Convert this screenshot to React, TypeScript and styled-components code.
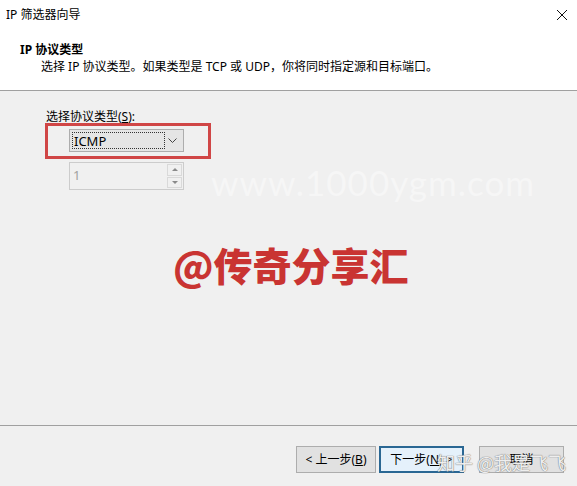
import React from 'react';
import styled, { createGlobalStyle } from 'styled-components';

const FONT = `"Noto Sans", "Noto Sans CJK SC", sans-serif`;

const GlobalStyle = createGlobalStyle`
  html, body {
    margin: 0;
    padding: 0;
    background: #f0f0f0;
  }
  body {
    font-family: ${FONT};
    font-size: 12px;
    color: #000;
  }
`;

const Window = styled.div`
  width: 577px;
  height: 486px;
  display: flex;
  flex-direction: column;
  overflow: hidden;
  position: relative;
`;

const Header = styled.div`
  height: 90px;
  background: #fff;
  border-bottom: 1px solid #a0a0a0;
  display: flex;
  flex-direction: column;
`;

const TitleBar = styled.div`
  height: 30px;
  display: flex;
  align-items: center;
  justify-content: space-between;
  padding: 0 9px 1px 6px;
  line-height: 16px;
`;

const CloseIcon = styled.svg`
  width: 12px;
  height: 12px;
  margin-top: -1px;
`;

const Heading = styled.div`
  margin-top: 11px;
  padding-left: 20px;
  font-weight: 700;
  line-height: 16px;
`;

const Subtitle = styled.div`
  padding-left: 41px;
  line-height: 17px;
`;

const Body = styled.div`
  flex: 1;
  position: relative;
  padding: 18px 0 0 46px;
`;

const FieldLabel = styled.div`
  line-height: 15px;
  u {
    text-decoration: underline;
  }
`;

const FieldColumn = styled.div`
  margin-left: 23px;
  display: flex;
  flex-direction: column;
  width: 115px;
`;

const ComboWrap = styled.div`
  position: relative;
  margin-top: 5px;
`;

const Annotation = styled.div`
  position: absolute;
  left: -24px;
  top: -6px;
  width: 166px;
  height: 36px;
  box-sizing: border-box;
  border: 3px solid #d04646;
  pointer-events: none;
`;

const Combo = styled.div`
  height: 23px;
  box-sizing: border-box;
  border: 1px solid #adadad;
  background: #e5e5e5;
  display: flex;
  align-items: center;
  padding: 0 6px 0 2px;
`;

const FocusText = styled.span`
  flex: 0 0 93px;
  height: 17px;
  box-sizing: border-box;
  border: 1px dotted #333;
  display: flex;
  align-items: center;
  padding-left: 1px;
  font-size: 13px;
`;

const Chevron = styled.svg`
  margin-left: auto;
  width: 9px;
  height: 6px;
`;

const Spin = styled.div`
  margin-top: 10px;
  height: 28px;
  box-sizing: border-box;
  border: 1px solid #cccccc;
  background: #f0f0f0;
  display: flex;
`;

const SpinValue = styled.div`
  flex: 1;
  color: #a0a0a0;
  padding: 3px 0 0 3px;
  font-size: 13px;
`;

const SpinButtons = styled.div`
  width: 15px;
  margin: 1px 1px 1px 0;
  display: flex;
  flex-direction: column;
  gap: 1px;
`;

const SpinButton = styled.div`
  flex: 1;
  border: 1px solid #d9d9d9;
  background: #f0f0f0;
  display: flex;
  align-items: center;
  justify-content: center;
`;

const Arrow = styled.div<{ $down?: boolean }>`
  width: 0;
  height: 0;
  border-left: 3px solid transparent;
  border-right: 3px solid transparent;
  ${(p) =>
    p.$down
      ? 'border-top: 3px solid #8a8a8a;'
      : 'border-bottom: 3px solid #8a8a8a;'}
`;

const SiteMark = styled.div`
  position: absolute;
  left: 211px;
  top: 70px;
  font-family: Lato, "DejaVu Sans", sans-serif;
  font-weight: 400;
  font-size: 35px;
  letter-spacing: 1px;
  color: #f6f6f6;
  pointer-events: none;
`;

const BrandMark = styled.div`
  position: absolute;
  left: 173px;
  top: 150px;
  font-family: "Noto Sans CJK SC", sans-serif;
  font-weight: 900;
  font-size: 39px;
  line-height: 46px;
  color: #c93432;
  pointer-events: none;
`;

const Footer = styled.div`
  height: 61px;
  border-top: 1px solid #a0a0a0;
  display: flex;
  align-items: flex-start;
  justify-content: flex-end;
  padding: 20px 13px 0 0;
  box-sizing: border-box;
  position: relative;
`;

const Button = styled.div<{ $w: number; $primary?: boolean; $gap?: number }>`
  width: ${(p) => p.$w}px;
  height: 27px;
  box-sizing: border-box;
  margin-left: ${(p) => p.$gap ?? 0}px;
  border: ${(p) => (p.$primary ? '2px solid #2a6793' : '1px solid #adadad')};
  background: ${(p) => (p.$primary ? '#e5f1fb' : '#e1e1e1')};
  display: flex;
  align-items: center;
  justify-content: center;
  line-height: 16px;
  u {
    text-decoration: underline;
  }
`;

const ZhihuMark = styled.div`
  position: absolute;
  left: 437px;
  top: 24px;
  font-family: "Noto Sans CJK SC", sans-serif;
  font-size: 18px;
  line-height: 24px;
  color: rgba(255, 255, 255, 0.9);
  text-shadow:
    0 0 1px #7a7a7a,
    0 0 1px #7a7a7a;
  white-space: pre;
  pointer-events: none;
`;

export default function App() {
  return (
    <Window>
      <GlobalStyle />
      <Header>
        <TitleBar>
          <span>IP 筛选器向导</span>
          <CloseIcon viewBox="0 0 12 12">
            <path d="M1 1L11 11M11 1L1 11" stroke="#111" strokeWidth="1" fill="none" />
          </CloseIcon>
        </TitleBar>
        <Heading>IP 协议类型</Heading>
        <Subtitle>选择 IP 协议类型。如果类型是 TCP 或 UDP，你将同时指定源和目标端口。</Subtitle>
      </Header>
      <Body>
        <FieldLabel>
          选择协议类型(<u>S</u>):
        </FieldLabel>
        <FieldColumn>
          <ComboWrap>
            <Combo>
              <FocusText>ICMP</FocusText>
              <Chevron viewBox="0 0 9 6">
                <path d="M0.5 0.5L4.5 4.5L8.5 0.5" stroke="#444" strokeWidth="1" fill="none" />
              </Chevron>
            </Combo>
            <Annotation />
          </ComboWrap>
          <Spin>
            <SpinValue>1</SpinValue>
            <SpinButtons>
              <SpinButton>
                <Arrow />
              </SpinButton>
              <SpinButton>
                <Arrow $down />
              </SpinButton>
            </SpinButtons>
          </Spin>
        </FieldColumn>
        <SiteMark>www.1000ygm.com</SiteMark>
        <BrandMark>@传奇分享汇</BrandMark>
      </Body>
      <Footer>
        <Button $w={80}>
          &lt; 上一步(<u>B</u>)
        </Button>
        <Button $w={85} $gap={3} $primary>
          下一步(<u>N</u>) &gt;
        </Button>
        <Button $w={85} $gap={15}>
          取消
        </Button>
        <ZhihuMark>知乎 @我是飞飞</ZhihuMark>
      </Footer>
    </Window>
  );
}
